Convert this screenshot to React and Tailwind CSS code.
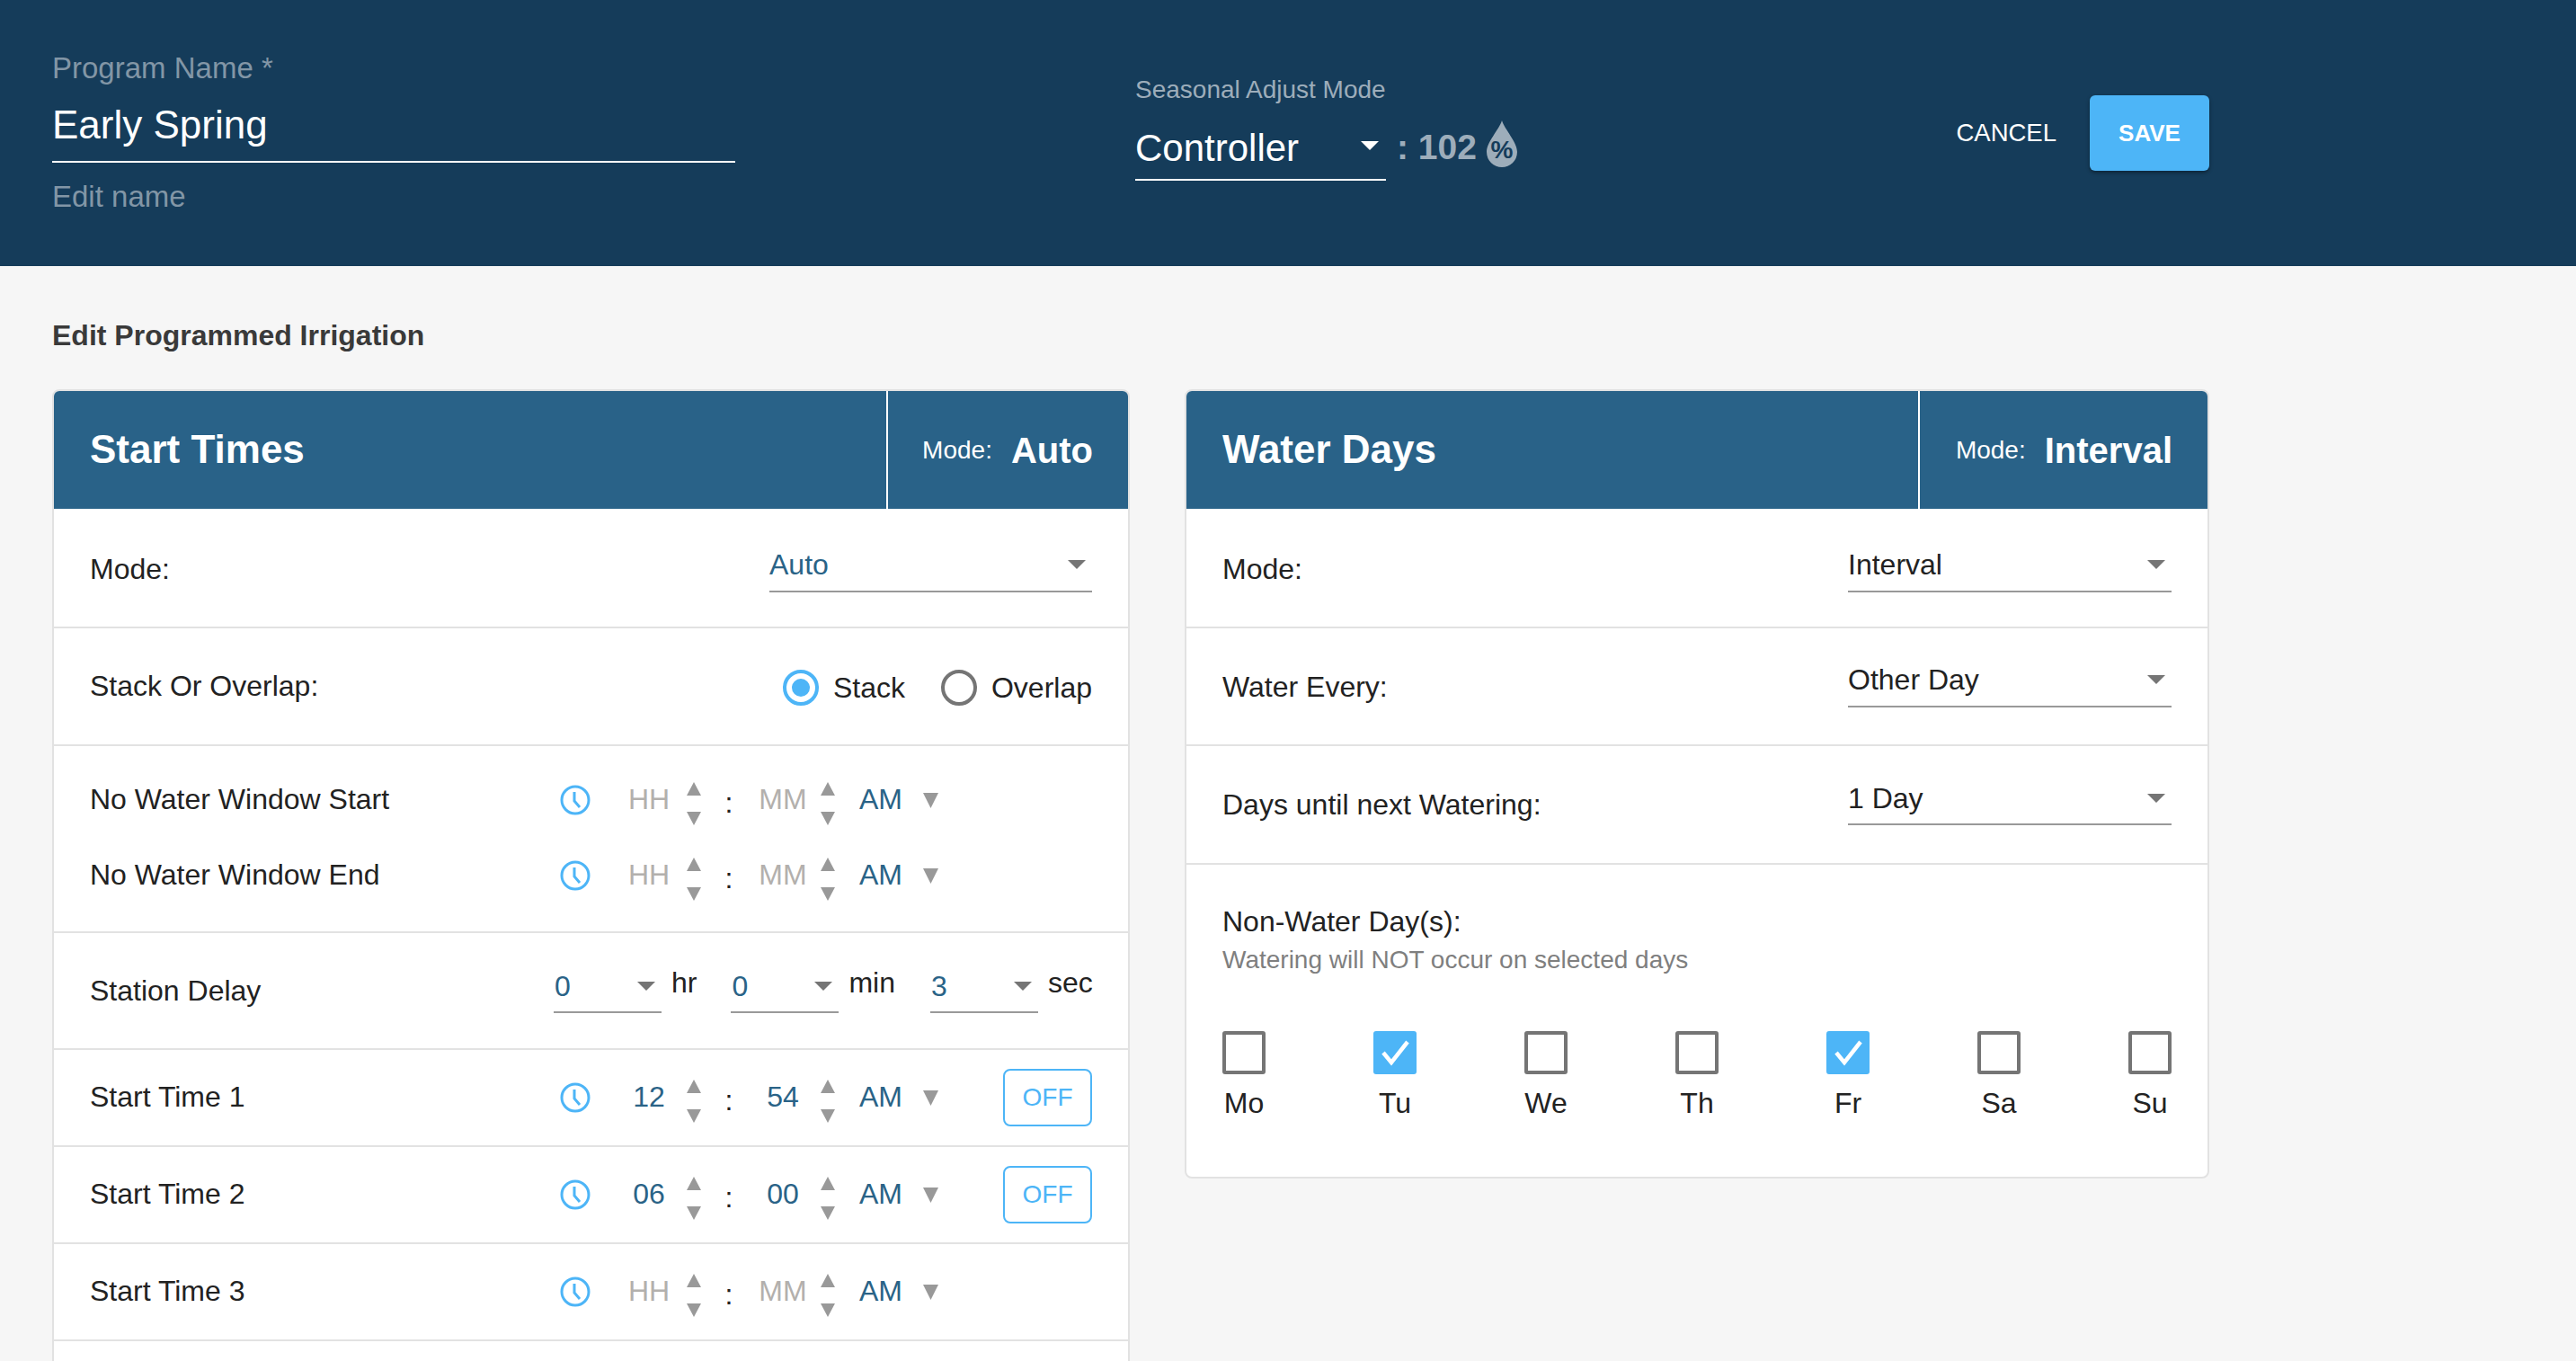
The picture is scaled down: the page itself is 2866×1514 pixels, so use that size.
import React from 'react'

const FONT = "font-['Liberation_Sans',Arial,sans-serif]"

function Tri({ up, className, w = 16, h = 15 }) {
  return (
    <svg width={w} height={h} viewBox="0 0 16 15" preserveAspectRatio="none" className={className}>
      <polygon points={up ? '8,0 16,15 0,15' : '0,0 16,0 8,15'} fill="currentColor" />
    </svg>
  )
}

function Clock() {
  return (
    <svg width="34" height="34" viewBox="0 0 34 34" className="shrink-0">
      <circle cx="17" cy="17" r="15" fill="none" stroke="#4db5f7" strokeWidth="3" />
      <path d="M16 8 V18 L22 25" fill="none" stroke="#4db5f7" strokeWidth="3" />
    </svg>
  )
}

function Spinner() {
  return (
    <div className="ml-[10px] mt-[7px] flex h-[48px] w-[16px] flex-col justify-between text-[#999999]">
      <Tri up />
      <Tri />
    </div>
  )
}

function TimeRow({ label, hh, mm, off, className }) {
  const valCls = hh ? 'text-[#2a6387]' : 'text-[#b3b0ad]'
  return (
    <div className={`flex items-center ${className}`}>
      <div className="w-[523px] shrink-0 pb-[2px] text-[32px] text-[#222222]">{label}</div>
      <Clock />
      <div className={`ml-[33px] w-[64px] pb-[3px] text-center text-[32px] ${valCls}`}>{hh || 'HH'}</div>
      <Spinner />
      <div className="ml-[26px] w-[10px] pt-[6px] text-center text-[32px] text-[#222222]">:</div>
      <div className={`ml-[23px] w-[64px] pb-[3px] text-center text-[32px] ${valCls}`}>{mm || 'MM'}</div>
      <Spinner />
      <div className="ml-[27px] w-[47px] pb-[3px] text-[32px] text-[#2a6387]">AM</div>
      <Tri w={17} h={17} className="ml-[24px] text-[#999999]" />
      {off && (
        <div className="ml-auto flex h-[64px] w-[99px] items-center justify-center rounded-[8px] border-2 border-[#4db5f7] text-[28px] text-[#4db5f7]">
          OFF
        </div>
      )}
    </div>
  )
}

function Select({ value, width, valueCls = 'text-[#222222]', className = '' }) {
  return (
    <div className={`flex h-[54px] ${width} items-center justify-between border-b-2 border-[#999999] pb-[5px] ${className}`}>
      <span className={`text-[32px] ${valueCls}`}>{value}</span>
      <Tri w={20} h={10} className="mr-[7px] text-[#757575]" />
    </div>
  )
}

function CardHead({ title, mode, leftWidth }) {
  return (
    <div className="flex h-[131px] rounded-t-[6px] bg-[#296288] text-white">
      <div className={`flex ${leftWidth} items-center border-r-2 border-white pb-[2px] pl-[40px] text-[44px] font-bold`}>{title}</div>
      <div className="flex flex-1 items-center justify-end pr-[39px]">
        <span className="mr-[21px] text-[28px]">Mode:</span>
        <span className="text-[40px] font-bold">{mode}</span>
      </div>
    </div>
  )
}

function Row({ label, h, labelCls = '', children }) {
  return (
    <div className={`flex ${h} items-center justify-between border-b-2 border-[#e2e2e2] px-[40px]`}>
      <span className={`text-[32px] text-[#222222] ${labelCls}`}>{label}</span>
      {children}
    </div>
  )
}

function Radio({ checked, label }) {
  return (
    <div className="flex items-center">
      <div className={`flex h-[40px] w-[40px] items-center justify-center rounded-full border-[4px] ${checked ? 'border-[#4db5f7]' : 'border-[#757575]'}`}>
        {checked && <div className="h-[20px] w-[20px] rounded-full bg-[#4db5f7]" />}
      </div>
      <span className="ml-[16px] text-[32px] text-[#222222]">{label}</span>
    </div>
  )
}

function DayCheck({ label, checked }) {
  return (
    <div className="flex w-[48px] flex-col items-center">
      {checked ? (
        <div className="flex h-[48px] w-[48px] items-center justify-center rounded-[3px] bg-[#4db5f7]">
          <svg width="36" height="30" viewBox="0 0 36 30">
            <path d="M5 15 L14 26 L32 3" fill="none" stroke="white" strokeWidth="4.5" />
          </svg>
        </div>
      ) : (
        <div className="h-[48px] w-[48px] rounded-[3px] border-[4px] border-[#757575]" />
      )}
      <span className="mt-[14px] text-[32px] leading-[37px] text-[#222222]">{label}</span>
    </div>
  )
}

function DelaySelect({ value, unit, ml = '' }) {
  return (
    <div className={`flex ${ml} items-start`}>
      <div className="flex h-[56px] w-[120px] items-center justify-between border-b-2 border-[#999999] pb-[2px]">
        <span className="pl-[1px] text-[32px] text-[#2a6387]">{value}</span>
        <Tri w={20} h={10} className="mr-[7px] text-[#757575]" />
      </div>
      <span className="ml-[11px] mt-[-2px] text-[32px] text-[#222222]">{unit}</span>
    </div>
  )
}

export default function App() {
  return (
    <div className={`h-screen overflow-hidden bg-[#f6f6f6] ${FONT}`}>
      {/* Header */}
      <div className="h-[296px] bg-[#153c5a]">
        <div className="flex w-[2458px] pl-[58px]">
          <div className="w-[760px] pt-[57px]">
            <div className="text-[33px] leading-[37px] text-[#8296a6]">Program Name *</div>
            <div className="mt-[10px] h-[77px] border-b-2 border-white pt-[5px] text-[44px] leading-[60px] text-white">Early Spring</div>
            <div className="mt-[19px] text-[33px] leading-[37px] text-[#8296a6]">Edit name</div>
          </div>
          <div className="ml-[445px] pt-[83px]">
            <div className="text-[28px] leading-[34px] text-[#9dadba]">Seasonal Adjust Mode</div>
            <div className="mt-[7px] flex items-start">
              <div className="flex h-[77px] w-[279px] items-center justify-between border-b-2 border-white pt-[6px]">
                <span className="text-[42px] text-white">Controller</span>
                <Tri w={20} h={10} className="mb-[6px] mr-[8px] text-white" />
              </div>
              <span className="ml-[12px] text-[39px] font-bold leading-[79px] text-[#9dadba]">: 102</span>
              <svg width="34" height="52" viewBox="0 0 34 52" className="ml-[11px] mt-[10px]">
                <path d="M17 0 C20 10 34 24 34 35 C34 45 26 52 17 52 C8 52 0 45 0 35 C0 24 14 10 17 0 Z" fill="#9dadba" />
                <text x="17" y="42" textAnchor="middle" fontSize="28" fontWeight="bold" fill="#153c5a" fontFamily="Liberation Sans">%</text>
              </svg>
            </div>
          </div>
          <div className="ml-auto flex items-start pt-[106px]">
            <span className="text-[27.5px] leading-[84px] text-white">CANCEL</span>
            <div className="ml-[37px] flex h-[84px] w-[133px] items-center justify-center rounded-[6px] bg-[#4db5f7] text-[26px] font-bold text-white shadow-[0_2px_4px_rgba(0,0,0,0.4)]">
              SAVE
            </div>
          </div>
        </div>
      </div>

      {/* Body */}
      <div className="pl-[58px] pt-[59px]">
        <div className="text-[32px] font-bold leading-[37px] text-[#3a3a3a]">Edit Programmed Irrigation</div>
        <div className="mt-[41px] flex items-start">
          {/* Start Times */}
          <div className="w-[1199px] rounded-[8px] border-2 border-[#e2e2e2] bg-white">
            <CardHead title="Start Times" mode="Auto" leftWidth="w-[928px]" />
            <Row label="Mode:" h="h-[133px]" labelCls="pt-[3px]">
              <Select value="Auto" width="w-[359px]" valueCls="text-[#2a6387]" />
            </Row>
            <Row label="Stack Or Overlap:" h="h-[131px]" labelCls="pb-[2px]">
              <div className="flex items-center gap-[40px] pt-[2px]">
                <Radio checked label="Stack" />
                <Radio label="Overlap" />
              </div>
            </Row>
            <div className="h-[208px] border-b-2 border-[#e2e2e2] px-[40px] pt-[35px]">
              <TimeRow label="No Water Window Start" className="h-[50px]" />
              <TimeRow label="No Water Window End" className="mt-[34px] h-[50px]" />
            </div>
            <div className="flex h-[130px] items-center border-b-2 border-[#e2e2e2] px-[40px] pb-[6px]">
              <span className="w-[516px] shrink-0 pt-[6px] text-[32px] text-[#222222]">Station Delay</span>
              <DelaySelect value="0" unit="hr" />
              <DelaySelect value="0" unit="min" ml="ml-[38px]" />
              <DelaySelect value="3" unit="sec" ml="ml-[39px]" />
            </div>
            <div className="flex h-[108px] items-center border-b-2 border-[#e2e2e2] px-[40px]">
              <TimeRow label="Start Time 1" hh="12" mm="54" off className="w-full" />
            </div>
            <div className="flex h-[108px] items-center border-b-2 border-[#e2e2e2] px-[40px]">
              <TimeRow label="Start Time 2" hh="06" mm="00" off className="w-full" />
            </div>
            <div className="flex h-[108px] items-center border-b-2 border-[#e2e2e2] px-[40px]">
              <TimeRow label="Start Time 3" className="w-full" />
            </div>
            <div className="h-[108px]" />
          </div>

          {/* Water Days */}
          <div className="ml-[61px] w-[1140px] rounded-[8px] border-2 border-[#e2e2e2] bg-white">
            <CardHead title="Water Days" mode="Interval" leftWidth="w-[816px]" />
            <Row label="Mode:" h="h-[133px]" labelCls="pt-[3px]"><Select value="Interval" width="w-[360px]" /></Row>
            <Row label="Water Every:" h="h-[131px]"><Select value="Other Day" width="w-[360px]" className="mb-[8px]" /></Row>
            <Row label="Days until next Watering:" h="h-[132px]"><Select value="1 Day" width="w-[360px]" className="mb-[8px]" /></Row>
            <div className="h-[347px] px-[40px] pt-[45px]">
              <div className="text-[32px] leading-[37px] text-[#222222]">Non-Water Day(s):</div>
              <div className="mt-[8px] text-[28px] leading-[32px] text-[#7f7f7f]">Watering will NOT occur on selected days</div>
              <div className="mt-[63px] flex justify-between">
                <DayCheck label="Mo" />
                <DayCheck label="Tu" checked />
                <DayCheck label="We" />
                <DayCheck label="Th" />
                <DayCheck label="Fr" checked />
                <DayCheck label="Sa" />
                <DayCheck label="Su" />
              </div>
            </div>
          </div>
        </div>
      </div>
    </div>
  )
}
